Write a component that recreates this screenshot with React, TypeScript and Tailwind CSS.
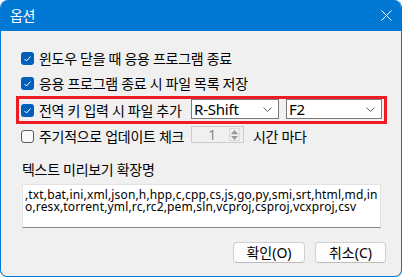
import React from "react";

const font = {
  fontFamily: '"Noto Sans", "Noto Sans CJK KR", sans-serif',
};

function CheckBox({ checked }: { checked: boolean }) {
  if (checked) {
    return (
      <span className="flex h-[13px] w-[13px] shrink-0 items-center justify-center rounded-[3px] bg-[#005fb8]">
        <svg width="13" height="13" viewBox="0 0 13 13">
          <path d="M3.5 7 L5.5 9 L9.5 4.5" fill="none" stroke="white" strokeWidth="1" />
        </svg>
      </span>
    );
  }
  return (
    <span className="h-[13px] w-[13px] shrink-0 rounded-[3px] border border-[#5c5c5c] bg-[#fafafa]" />
  );
}

function Chevron() {
  return (
    <svg width="9" height="5" viewBox="0 0 9 5">
      <path d="M0.5 0.5 L4.5 4.5 L8.5 0.5" fill="none" stroke="#606060" strokeWidth="1" />
    </svg>
  );
}

function Select({ value, width }: { value: string; width: string }) {
  return (
    <div
      className={`flex h-[20px] ${width} items-center justify-between border border-[#7a7a7a] bg-white pl-[2px] pr-[6px] text-[15px] leading-none tracking-[-0.2px] text-black`}
    >
      <span>{value}</span>
      <Chevron />
    </div>
  );
}

export default function App() {
  return (
    <div className="h-[277px] w-[403px] bg-white text-black" style={font}>
      <div className="flex h-[277px] w-[402px] flex-col overflow-hidden rounded-t-lg rounded-b-[7px] border-x border-b border-[#0078d4] bg-[#f0f0f0]">
        {/* Title bar */}
        <div className="flex h-[31px] shrink-0 items-center justify-between bg-[#0078d4] pl-[9px] pr-[9px] text-[14px] tracking-[-0.35px] text-white">
          <span>옵션</span>
          <svg width="11" height="11" viewBox="0 0 11 11">
            <path d="M0.5 0.5 L10.5 10.5 M10.5 0.5 L0.5 10.5" stroke="white" strokeWidth="1" />
          </svg>
        </div>

        {/* Body */}
        <div className="flex flex-1 flex-col px-[15px] pt-[14px] text-[14px] tracking-[-0.3px]">
          <div className="flex h-[26px] items-center gap-[5px] pl-[5px]">
            <CheckBox checked />
            <span>윈도우 닫을 때 응용 프로그램 종료</span>
          </div>
          <div className="flex h-[25px] items-center gap-[5px] pl-[5px]">
            <CheckBox checked />
            <span>응용 프로그램 종료 시 파일 목록 저장</span>
          </div>
          <div className="flex h-[28px] w-[371px] items-center border-[3px] border-[#ed1c24] pl-[2px]">
            <CheckBox checked />
            <span className="ml-[5px] w-[152px]">전역 키 입력 시 파일 추가</span>
            <div className="-mt-[2px] flex gap-[7px]">
              <Select value="R-Shift" width="w-[88px]" />
              <Select value="F2" width="w-[96px]" />
            </div>
          </div>
          <div className="flex h-[24px] items-center pl-[5px]">
            <CheckBox checked={false} />
            <span className="ml-[5px] w-[152px]">주기적으로 업데이트 체크</span>
            <div className="-mt-[3px] flex h-[17px] w-[53px] items-stretch border border-[#cccccc] bg-[#f0f0f0]">
              <span className="flex-1 pr-[13px] text-right text-[14px] leading-[15px] text-[#8a8a8a]">1</span>
              <div className="my-[1px] mr-[3px] flex w-[11px] flex-col border border-[#d9d9d9]">
                <span className="flex flex-1 items-center justify-center border-b border-[#d9d9d9]">
                  <svg width="7" height="4" viewBox="0 0 7 4">
                    <path d="M0 4 L3.5 0 L7 4 Z" fill="#9a9a9a" />
                  </svg>
                </span>
                <span className="flex flex-1 items-center justify-center">
                  <svg width="7" height="4" viewBox="0 0 7 4">
                    <path d="M0 0 L3.5 4 L7 0 Z" fill="#9a9a9a" />
                  </svg>
                </span>
              </div>
            </div>
            <span className="ml-[9px]">시간 마다</span>
          </div>

          <div className="mt-[15px] h-[14px] pl-[6px] leading-[14px]">텍스트 미리보기 확장명</div>

          <div className="ml-[6px] mt-[7px] h-[44px] w-[359px] border border-b-[#868686] border-[#e3e3e3] bg-white pl-[2px] pt-[4px] text-[12px] leading-[12px] tracking-[0.15px] whitespace-nowrap">
            <div>,txt,bat,ini,xml,json,h,hpp,c,cpp,cs,js,go,py,smi,srt,html,md,in</div>
            <div>o,resx,torrent,yml,rc,rc2,pem,sln,vcproj,csproj,vcxproj,csv</div>
          </div>

          <div className="mt-[14px] flex justify-end gap-[10px]">
            <button className="h-[21px] w-[72px] rounded-[4px] border border-[#d0d0d0] border-b-[#bcbcbc] bg-[#fdfdfd] text-[14px] leading-none tracking-[0px]">
              확인(O)
            </button>
            <button className="h-[21px] w-[71px] rounded-[4px] border border-[#d0d0d0] border-b-[#bcbcbc] bg-[#fdfdfd] text-[14px] leading-none tracking-[0px]">
              취소(C)
            </button>
          </div>
        </div>
      </div>
    </div>
  );
}
